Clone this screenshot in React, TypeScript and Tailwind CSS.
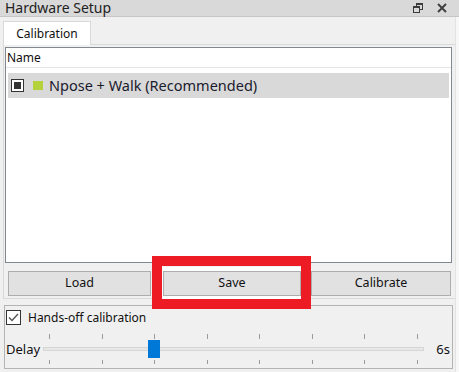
const ticks = [0, 1, 2, 3, 4, 5, 6, 7];

function FloatIcon() {
  return (
    <svg width="10" height="11" viewBox="0 0 10 11" className="block">
      <rect x="3.5" y="0.5" width="6" height="6" fill="none" stroke="#3c3c3c" />
      <rect x="3" y="0" width="7" height="2" fill="#3c3c3c" />
      <rect x="0.5" y="3.5" width="6" height="6" fill="#d9d9d9" stroke="#3c3c3c" />
      <rect x="0" y="3" width="7" height="2" fill="#3c3c3c" />
    </svg>
  );
}

function CloseIcon() {
  return (
    <svg width="10" height="10" viewBox="0 0 10 10" className="block">
      <path d="M1 1 L9 9 M9 1 L1 9" stroke="#3c3c3c" strokeWidth="1.8" />
    </svg>
  );
}

function App() {
  return (
    <div
      className="relative w-[459px] h-[372px] overflow-hidden bg-[#f0f0f0] text-[#111]"
      style={{ fontFamily: '"Noto Sans", "Open Sans", sans-serif' }}
    >
      {/* dock title */}
      <div className="h-[17px] bg-[#d9d9d9] border-b border-[#c6c6c6] flex items-center pl-[5px] pr-[12px]">
        <span className="text-[14px] leading-[16px] text-[#222]">Hardware Setup</span>
        <div className="ml-auto flex items-center gap-[14px]">
          <FloatIcon />
          <CloseIcon />
        </div>
      </div>

      {/* tabs */}
      <div className="pt-[4px] pl-[3px] flex">
        <div className="relative z-10 -mb-px h-[24px] w-[88px] bg-white border border-b-0 border-[#d9d9d9] flex items-center justify-center text-[12px]">
          Calibration
        </div>
      </div>

      {/* tab pane */}
      <div className="ml-[3px] w-[453px] h-[255px] border border-[#d9d9d9] pt-[2px] pl-[1px]">
        <div className="w-[447px] h-[216px] bg-white border border-[#828790]">
          <div className="h-[20px] border-b border-[#e5e5e5] flex items-center pl-[1px] text-[12px]">
            Name
          </div>
          <div className="mt-[5px] mx-[2px] h-[25px] bg-[#d9d9d9] flex items-center">
            <div className="ml-[3px] w-[13px] h-[13px] border border-[#333] bg-white flex items-center justify-center">
              <div className="w-[7px] h-[7px] bg-[#333]" />
            </div>
            <div className="ml-[9px] w-[10px] h-[9px] bg-[#b4d23c]" />
            <span className="ml-[6px] text-[14.5px] leading-none text-[#1a1a2e]">
              Npose + Walk (Recommended)
            </span>
          </div>
        </div>

        <div className="mt-[8px] flex pl-[3px] text-[12.5px]">
          <button className="w-[143px] h-[25px] bg-[#e1e1e1] border border-[#adadad]">Load</button>
          <button className="ml-[12px] w-[138px] h-[25px] bg-[#e1e1e1] border border-[#adadad] shadow-[0_0_0_4px_white]">
            Save
          </button>
          <button className="ml-[10px] w-[140px] h-[25px] bg-[#e1e1e1] border border-[#adadad]">
            Calibrate
          </button>
        </div>
      </div>

      {/* hands-off group */}
      <div className="mt-[6px] ml-[4px] w-[449px] h-[64px] border border-[#b4b4b4] pl-[1px] pt-[4px]">
        <div className="flex items-center h-[15px]">
          <div className="w-[15px] h-[15px] border border-[#333] bg-white flex items-center justify-center">
            <svg width="11" height="9" viewBox="0 0 11 9">
              <path d="M1 4.5 L4 7.5 L10 1" fill="none" stroke="#555" strokeWidth="1.4" />
            </svg>
          </div>
          <span className="ml-[7px] text-[12px] leading-none">Hands-off calibration</span>
        </div>

        <div className="mt-[9px] flex items-center">
          <span className="w-[37px] text-[13px] leading-none">Delay</span>
          <div className="relative w-[381px] h-[30px]">
            <div className="absolute left-0 right-0 top-[13px] h-[4px] bg-[#e7e7e7] border border-[#d6d6d6]" />
            {ticks.map((t) => (
              <div key={t}>
                <div
                  className="absolute top-0 w-px h-[5px] bg-[#9a9a9a]"
                  style={{ left: 6 + (t * 368) / 7 }}
                />
                <div
                  className="absolute top-[26px] w-px h-[4px] bg-[#9a9a9a]"
                  style={{ left: 6 + (t * 368) / 7 }}
                />
              </div>
            ))}
            <div className="absolute top-[6px] left-[105px] w-[12px] h-[18px] bg-[#0078d7]" />
          </div>
          <span className="ml-auto mr-[2px] text-[13px] leading-none">6s</span>
        </div>
      </div>

      {/* right edge strip */}
      <div className="absolute top-[17px] bottom-0 left-[455px] right-0 bg-[#f7f7f7] border-l border-[#e3e3e3]" />

      {/* annotation */}
      <div className="absolute left-[152px] top-[256px] w-[159px] h-[53px] border-[10px] border-[#ed1c24]" />
    </div>
  );
}

export default App;
